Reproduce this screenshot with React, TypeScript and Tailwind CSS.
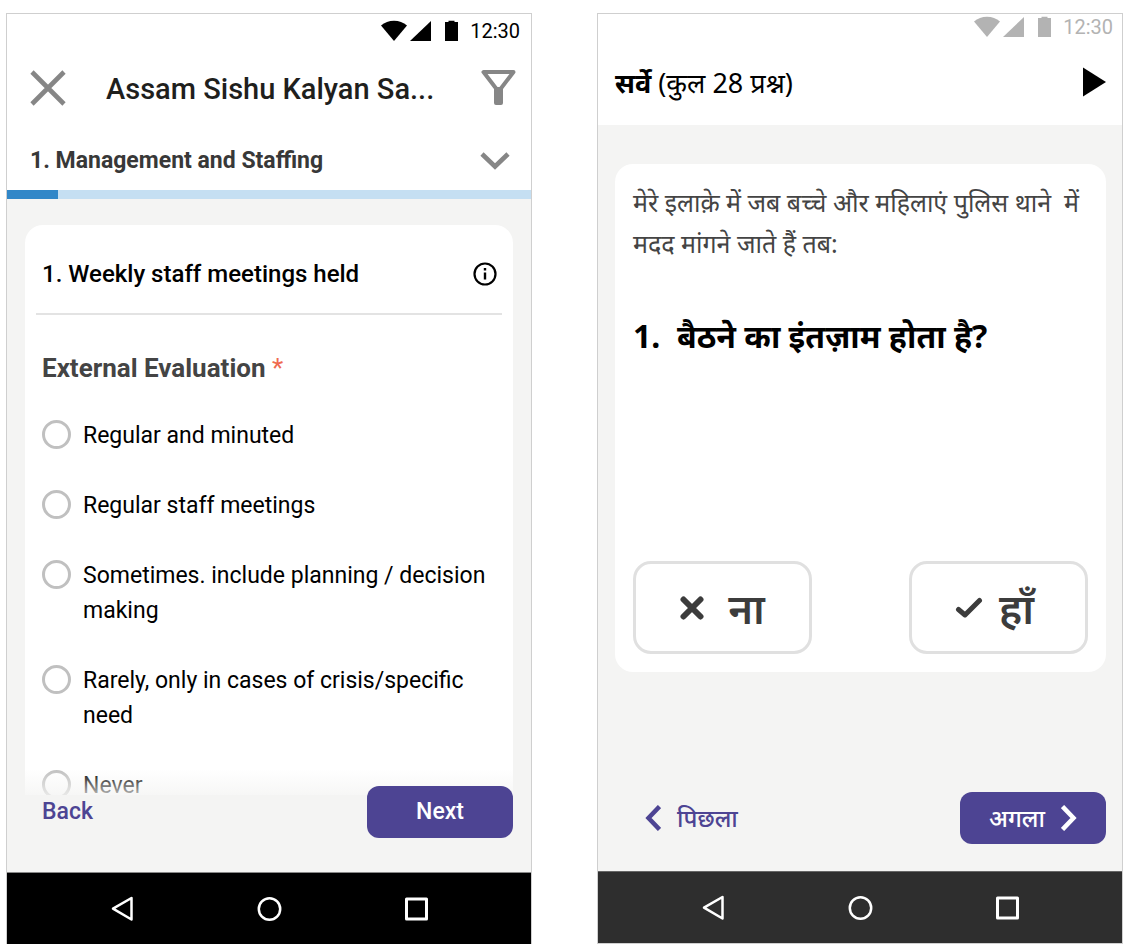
import { useState } from 'react';

const evaluationOptions = [
  'Regular and minuted',
  'Regular staff meetings',
  'Sometimes. include planning / decision making',
  'Rarely, only in cases of crisis/specific need',
  'Never',
];

function StatusBar({ className }: { className: string }) {
  return (
    <div className={`flex items-center justify-end ${className}`}>
      <svg width="78" height="22" viewBox="0 0 78 22" fill="currentColor" aria-hidden="true">
        <path d="M1 5.500C4.600 2.400 9 .8 14 .8s9.400 1.600 13 4.700L14 21z" />
        <path d="M51 1v20H30z" />
        <path d="M65 2h3.500V.8h6V2H78v19H65z" />
      </svg>
      <span className="ml-3 text-[20px] leading-6">12:30</span>
    </div>
  );
}

function NavBar({ className }: { className: string }) {
  return (
    <nav className={`flex justify-center text-white ${className}`}>
      <div className="grid h-[71px] w-[440px] grid-cols-3 place-items-center">
        <button type="button" aria-label="Back">
          <svg width="28" height="28" viewBox="0 0 28 28" fill="none" stroke="currentColor" strokeWidth="2.500" strokeLinejoin="round">
            <path d="M23.500 3v21.500L5 13.700z" />
          </svg>
        </button>
        <button type="button" aria-label="Home">
          <svg width="28" height="28" viewBox="0 0 28 28" fill="none" stroke="currentColor" strokeWidth="2.500">
            <circle cx="14.500" cy="14" r="10.700" />
          </svg>
        </button>
        <button type="button" aria-label="Overview">
          <svg width="28" height="28" viewBox="0 0 28 28" fill="none" stroke="currentColor" strokeWidth="3" strokeLinejoin="round">
            <rect x="4.500" y="4" width="20" height="20" />
          </svg>
        </button>
      </div>
    </nav>
  );
}

function EvaluationScreen() {
  const [selected, setSelected] = useState('');

  return (
    <section className="flex flex-col border border-b-0 border-[#cfcfcf] bg-[#f4f4f3] font-['Roboto',sans-serif] text-black">
      <header className="bg-white">
        <StatusBar className="pt-[5px] pr-[11px] text-black" />
        <div className="flex h-[90px] items-center pr-[15px] pl-[23px]">
          <button type="button" aria-label="Close" className="text-[#868686]">
            <svg width="36" height="36" viewBox="0 0 36 36" fill="none" stroke="currentColor" strokeWidth="4.600">
              <path d="M2 2l32 32M34 2L2 34" />
            </svg>
          </button>
          <h1 className="ml-10 flex-1 pt-0.5 text-[29px] leading-9 font-medium text-[#1f1f1d]">Assam Sishu Kalyan Sa...</h1>
          <button type="button" aria-label="Filter" className="text-[#868686]">
            <svg width="35" height="38" viewBox="0 0 35 38" fill="none" stroke="currentColor" strokeWidth="4" strokeLinejoin="round">
              <path d="M2.500 3h30L19.500 20h-4z" />
              <path d="M15 20.500h5V34h-5z" fill="currentColor" />
            </svg>
          </button>
        </div>
        <div className="flex h-[57px] items-center justify-between pr-[21px] pb-0.5 pl-[23px]">
          <h2 className="text-[23px] leading-7 font-bold text-[#383838]">1. Management and Staffing</h2>
          <button type="button" aria-label="Show sections" className="text-[#868686]">
            <svg width="30" height="20" viewBox="0 0 30 20" fill="none" stroke="currentColor" strokeWidth="4.600">
              <path d="M2 3l13 12.500L28 3" />
            </svg>
          </button>
        </div>
        <div className="h-[9px] bg-[#c5dff2]">
          <div className="h-full w-[51px] bg-[#3187c8]" />
        </div>
      </header>

      <main className="mx-[18px] mt-[26px] rounded-t-[18px] bg-white px-[11px]">
        <div className="flex h-[90px] items-center justify-between border-b-2 border-[#e3e3e3] pt-[10px] pr-[5px] pl-[6px]">
          <h3 className="text-[24px] leading-7 font-medium">1. Weekly staff meetings held</h3>
          <button type="button" aria-label="More information">
            <svg width="24" height="24" viewBox="0 0 24 24" fill="none" stroke="currentColor" strokeWidth="2.200">
              <circle cx="12" cy="12" r="10.500" />
              <path d="M12 10.500v7M12 6v2.500" strokeWidth="2.400" />
            </svg>
          </button>
        </div>
        <fieldset className="px-[6px]">
          <legend className="pt-[37px] text-[26px] leading-8 font-bold text-[#444]">
            External Evaluation <span className="font-normal text-[#ef6a50]">*</span>
          </legend>
          <div className="mt-[34px] flex flex-col gap-[35px]">
            {evaluationOptions.map((option) => (
              <label key={option} className="flex items-start gap-3 text-[23px] leading-[35px]">
                <input
                  type="radio"
                  name="evaluation"
                  value={option}
                  checked={selected === option}
                  onChange={() => setSelected(option)}
                  className="mt-[2px] size-[29px] shrink-0 appearance-none rounded-full border-[3px] border-[#c0c0c0] bg-white checked:border-[9px] checked:border-[#4d4493]"
                />
                {option}
              </label>
            ))}
          </div>
        </fieldset>
      </main>

      {/* The footer fades out the end of the scrolled list */}
      <footer className="relative -mt-[34px] flex items-center justify-between bg-[linear-gradient(to_bottom,rgba(244,244,243,0)_0px,rgba(244,244,243,0.75)_26px,#f4f4f3_26px)] px-[18px] pt-[17px] pb-[34px]">
        <button type="button" className="pl-[17px] text-[23px] leading-7 font-medium text-[#4d4493]">Back</button>
        <button type="button" className="h-[52px] w-[146px] rounded-xl bg-[#4d4493] text-[23px] leading-7 font-medium text-white">Next</button>
      </footer>

      <NavBar className="border-t border-[#888] bg-black" />
    </section>
  );
}

function SurveyScreen() {
  return (
    <section lang="hi" className="flex flex-col self-start border border-[#cfcfcf] bg-[#f4f4f3] font-['Noto_Sans',sans-serif] text-black">
      <header className="bg-white">
        <StatusBar className="pt-px pr-[9px] font-['Roboto',sans-serif] text-[#b3b3b3]" />
        <div className="flex h-[86px] items-center justify-between pr-4 pl-[17px]">
          <h1 className="pt-0.5 text-[27px] leading-9">
            <b>सर्वे</b> (कुल 28 प्रश्न)
          </h1>
          <button type="button" aria-label="Play">
            <svg width="23" height="30" viewBox="0 0 23 30" fill="currentColor">
              <path d="M0 .5v29L23 15z" />
            </svg>
          </button>
        </div>
      </header>

      <main className="mr-4 ml-[17px] mt-[39px] rounded-[18px] bg-white px-[18px] pt-[18px] pb-[18px]">
        <p className="text-[25px] leading-[41px] text-[#444]">
          मेरे इलाक़े में जब बच्चे और महिलाएं पुलिस थाने&nbsp; में
          <br />
          मदद मांगने जाते हैं तब:
        </p>
        <h2 className="mt-[50px] text-[32px] leading-[44px] font-bold whitespace-pre">1.  बैठने का इंतज़ाम होता है?</h2>
        <div className="mt-[203px] flex justify-between">
          <button type="button" className="flex h-[93px] w-[179px] items-center justify-center gap-6 rounded-[18px] border-[3px] border-[#e0e0e0] text-[42px] leading-[60px] font-semibold text-[#3c3c3c]">
            <svg width="24" height="24" viewBox="0 0 24 24" fill="none" stroke="currentColor" strokeWidth="6" strokeLinecap="round" aria-hidden="true">
              <path d="M3.500 3.500l17 17M20.500 3.500l-17 17" />
            </svg>
            ना
          </button>
          <button type="button" className="flex h-[93px] w-[179px] items-center justify-center gap-4 rounded-[18px] border-[3px] border-[#e0e0e0] pr-2 text-[42px] leading-[60px] font-semibold text-[#3c3c3c]">
            <svg width="28" height="22" viewBox="0 0 28 22" fill="none" stroke="currentColor" strokeWidth="5" strokeLinecap="round" strokeLinejoin="round" aria-hidden="true">
              <path d="M3.500 12.500l6.500 5.500L24.500 3.500" />
            </svg>
            हाँ
          </button>
        </div>
      </main>

      <footer className="mt-[120px] flex items-center justify-between pr-4 pb-[27px] pl-[47px]">
        <button type="button" className="flex items-center gap-4 text-[24px] leading-8 font-medium text-[#4d4493]">
          <svg width="16" height="26" viewBox="0 0 16 26" fill="none" stroke="currentColor" strokeWidth="4.500" aria-hidden="true">
            <path d="M14.500 1.500L3.500 13l11 11.500" />
          </svg>
          पिछला
        </button>
        <button type="button" className="flex h-[52px] w-[146px] items-center justify-center gap-4 rounded-xl bg-[#4d4493] text-[24px] leading-8 font-medium text-white">
          अगला
          <svg width="16" height="26" viewBox="0 0 16 26" fill="none" stroke="currentColor" strokeWidth="4.500" aria-hidden="true">
            <path d="M1.500 1.500l11 11.500-11 11.500" />
          </svg>
        </button>
      </footer>

      <NavBar className="border-t border-[#666] bg-[#2e2e2e]" />
    </section>
  );
}

export default function App() {
  return (
    <div className="grid grid-cols-2 gap-[65px] bg-white pt-[13px] pr-[11px] pl-[6px]">
      <EvaluationScreen />
      <SurveyScreen />
    </div>
  );
}
